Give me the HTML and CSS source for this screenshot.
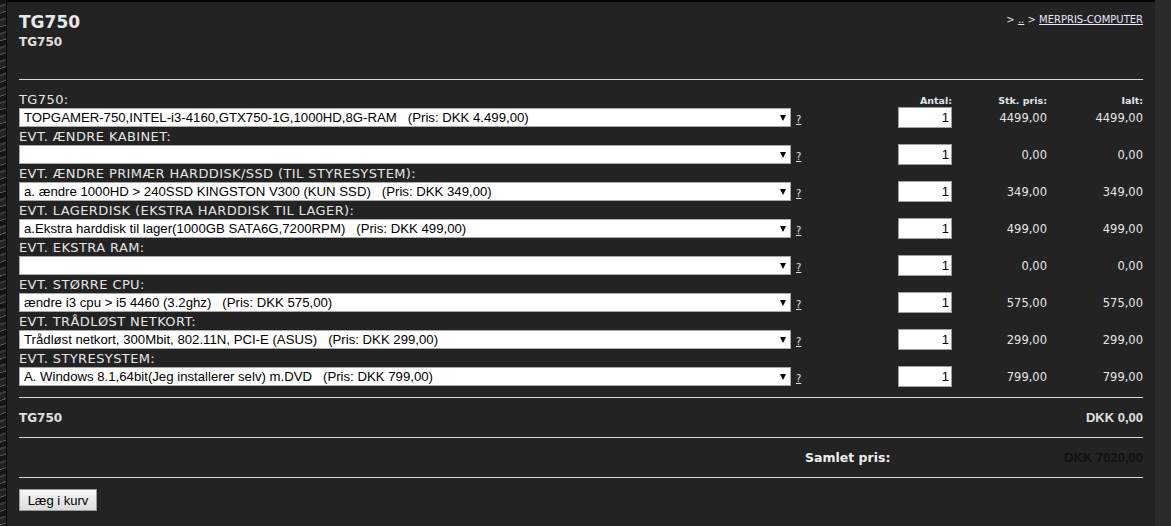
FILE: index.html
```html
<!DOCTYPE html>
<html lang="da">
<head>
<meta charset="utf-8">
<title>TG750</title>
<link rel="stylesheet" href="styles.css">
</head>
<body>
<div class="texture"></div>
<main class="panel">
  <header class="page-head">
    <div class="titles">
      <h1 class="title">TG750</h1>
      <div class="subtitle">TG750</div>
    </div>
    <nav class="crumbs">&gt; <a href="#">..</a> &gt; <a href="#">MERPRIS-COMPUTER</a></nav>
  </header>
  <hr class="rule head-rule">

  <section class="items">
    <div class="item">
      <label class="item-label">TG750:</label>
      <span class="col-head qty-head">Antal:</span>
      <span class="col-head stk-head">Stk. pris:</span>
      <span class="col-head tot-head">Ialt:</span>
      <div class="select-wrap"><select class="opt"><option>TOPGAMER-750,INTEL-i3-4160,GTX750-1G,1000HD,8G-RAM &nbsp;&nbsp;(Pris: DKK 4.499,00)</option></select></div>
      <a class="help" href="#">?</a>
      <input class="qty" type="text" value="1">
      <span class="price stk">4499,00</span>
      <span class="price tot">4499,00</span>
    </div>

    <div class="item">
      <label class="item-label">EVT. ÆNDRE KABINET:</label>
      <div class="select-wrap"><select class="opt"><option></option></select></div>
      <a class="help" href="#">?</a>
      <input class="qty" type="text" value="1">
      <span class="price stk">0,00</span>
      <span class="price tot">0,00</span>
    </div>

    <div class="item">
      <label class="item-label">EVT. ÆNDRE PRIMÆR HARDDISK/SSD (TIL STYRESYSTEM):</label>
      <div class="select-wrap"><select class="opt"><option>a. ændre 1000HD &gt; 240SSD KINGSTON V300 (KUN SSD) &nbsp;&nbsp;(Pris: DKK 349,00)</option></select></div>
      <a class="help" href="#">?</a>
      <input class="qty" type="text" value="1">
      <span class="price stk">349,00</span>
      <span class="price tot">349,00</span>
    </div>

    <div class="item">
      <label class="item-label">EVT. LAGERDISK (EKSTRA HARDDISK TIL LAGER):</label>
      <div class="select-wrap"><select class="opt"><option>a.Ekstra harddisk til lager(1000GB SATA6G,7200RPM) &nbsp;&nbsp;(Pris: DKK 499,00)</option></select></div>
      <a class="help" href="#">?</a>
      <input class="qty" type="text" value="1">
      <span class="price stk">499,00</span>
      <span class="price tot">499,00</span>
    </div>

    <div class="item">
      <label class="item-label">EVT. EKSTRA RAM:</label>
      <div class="select-wrap"><select class="opt"><option></option></select></div>
      <a class="help" href="#">?</a>
      <input class="qty" type="text" value="1">
      <span class="price stk">0,00</span>
      <span class="price tot">0,00</span>
    </div>

    <div class="item">
      <label class="item-label">EVT. STØRRE CPU:</label>
      <div class="select-wrap"><select class="opt"><option>ændre i3 cpu &gt; i5 4460 (3.2ghz) &nbsp;&nbsp;(Pris: DKK 575,00)</option></select></div>
      <a class="help" href="#">?</a>
      <input class="qty" type="text" value="1">
      <span class="price stk">575,00</span>
      <span class="price tot">575,00</span>
    </div>

    <div class="item">
      <label class="item-label">EVT. TRÅDLØST NETKORT:</label>
      <div class="select-wrap"><select class="opt"><option>Trådløst netkort, 300Mbit, 802.11N, PCI-E (ASUS) &nbsp;&nbsp;(Pris: DKK 299,00)</option></select></div>
      <a class="help" href="#">?</a>
      <input class="qty" type="text" value="1">
      <span class="price stk">299,00</span>
      <span class="price tot">299,00</span>
    </div>

    <div class="item">
      <label class="item-label">EVT. STYRESYSTEM:</label>
      <div class="select-wrap"><select class="opt"><option>A. Windows 8.1,64bit(Jeg installerer selv) m.DVD &nbsp;&nbsp;(Pris: DKK 799,00)</option></select></div>
      <a class="help" href="#">?</a>
      <input class="qty" type="text" value="1">
      <span class="price stk">799,00</span>
      <span class="price tot">799,00</span>
    </div>
  </section>

  <hr class="rule items-rule">
  <div class="sum-row">
    <span class="sum-name">TG750</span>
    <span class="sum-value">DKK 0,00</span>
  </div>
  <hr class="rule">
  <div class="sum-row total-row">
    <span></span>
    <span class="total-label">Samlet pris:</span>
    <span class="total-value">DKK 7020,00</span>
  </div>
  <hr class="rule">
  <div class="actions">
    <button class="basket" type="button">Læg i kurv</button>
  </div>
</main>
</body>
</html>
```

FILE: styles.css
```css
html, body {
  margin: 0;
  padding: 0;
}

body {
  background: #2b2b2b;
  display: flex;
  min-height: 526px;
  font-family: "DejaVu Sans", Verdana, sans-serif;
  color: #e0e0e0;
}

.texture {
  width: 6px;
  flex: none;
  background:
    repeating-linear-gradient(160deg, #151515 0 5px, #3a3a3a 5px 7px, #222 7px 12px, #555 12px 13px);
}

.panel {
  width: 1149px;
  flex: none;
  box-sizing: border-box;
  background: #232323;
  border-top: 2px solid #000;
  border-left: 1px solid #000;
  padding: 10px 12px 0 12px;
}

.page-head {
  display: flex;
  justify-content: space-between;
  align-items: flex-start;
}

.title {
  margin: 0;
  font-size: 17px;
  line-height: 20px;
  font-weight: bold;
  color: #e8e8e8;
}

.subtitle {
  margin-top: 3px;
  font-size: 12px;
  line-height: 15px;
  font-weight: bold;
  color: #e0e0e0;
}

.crumbs {
  margin-top: 1px;
  font-size: 10px;
  line-height: 13px;
  color: #e0e0e0;
}

.crumbs a {
  color: #e8e8ff;
  text-decoration: underline;
}

.rule {
  margin: 0;
  border: 0;
  height: 1px;
  background: #d8d8d8;
}

.head-rule {
  margin-top: 29px;
}

.items {
  padding-top: 10px;
}

.item {
  display: grid;
  grid-template-columns: 772px 30px 1fr 54px 95px 96px;
  grid-template-rows: 18px 19px;
  align-items: center;
}

.item-label {
  grid-column: 1 / 4;
  grid-row: 1;
  font-size: 13px;
  line-height: 17px;
  letter-spacing: 0.4px;
  color: #e6e6e6;
  white-space: nowrap;
}

.col-head {
  grid-row: 1;
  font-size: 9.5px;
  font-weight: bold;
  text-align: right;
  color: #dfe3f0;
  align-self: end;
  line-height: 14px;
}

.qty-head { grid-column: 4; }
.stk-head { grid-column: 5; }
.tot-head { grid-column: 6; }

.select-wrap {
  grid-column: 1;
  grid-row: 2;
  position: relative;
  height: 19px;
}

.select-wrap::after {
  content: "";
  position: absolute;
  right: 5px;
  top: 7px;
  border-left: 3.5px solid transparent;
  border-right: 3.5px solid transparent;
  border-top: 6px solid #000;
  pointer-events: none;
}

.opt {
  appearance: none;
  -webkit-appearance: none;
  display: block;
  width: 100%;
  height: 19px;
  box-sizing: border-box;
  margin: 0;
  padding: 0 20px 0 4px;
  border: 1px solid #a9a9a9;
  border-radius: 0;
  background: #fff;
  color: #000;
  font-family: "Liberation Sans", Arial, sans-serif;
  font-size: 13.2px;
  line-height: 17px;
}

.help {
  grid-column: 2;
  grid-row: 2;
  padding-left: 5px;
  font-size: 10px;
  color: #e0e0e0;
  text-decoration: underline;
  line-height: 14px;
  margin-top: 4px;
}

.qty {
  grid-column: 4;
  grid-row: 2;
  width: 54px;
  height: 21px;
  margin: -1px 0;
  box-sizing: border-box;
  border: 1px solid #a0a0a0;
  border-radius: 0;
  background: #fff;
  color: #000;
  padding: 0 2px 0 0;
  text-align: right;
  font-family: "Liberation Sans", Arial, sans-serif;
  font-size: 13px;
}

.price {
  grid-row: 2;
  text-align: right;
  font-size: 11.5px;
  color: #e6e6e6;
}

.price.stk { grid-column: 5; }
.price.tot { grid-column: 6; }

.items-rule {
  margin-top: 11px;
}

.sum-row {
  display: flex;
  justify-content: space-between;
  align-items: center;
  height: 39px;
}

.sum-name {
  font-size: 12px;
  font-weight: bold;
  color: #e0e0e0;
}

.sum-value {
  font-family: "Liberation Sans", Arial, sans-serif;
  font-size: 13px;
  font-weight: bold;
  color: #e0e0e0;
}

.total-row {
  display: grid;
  grid-template-columns: 786px 1fr auto;
}

.total-label {
  font-size: 12.5px;
  font-weight: bold;
  color: #eeeeee;
}

.total-value {
  font-family: "Liberation Sans", Arial, sans-serif;
  font-size: 13px;
  font-weight: bold;
  color: #111;
}

.actions {
  padding: 11px 0 14px;
}

.basket {
  height: 22px;
  width: 78px;
  box-sizing: border-box;
  border: 1px solid #9a9a9a;
  border-radius: 0;
  background: linear-gradient(#f6f6f6, #dddddd);
  color: #000;
  font-family: "Liberation Sans", Arial, sans-serif;
  font-size: 13px;
  padding: 0;
}
```
